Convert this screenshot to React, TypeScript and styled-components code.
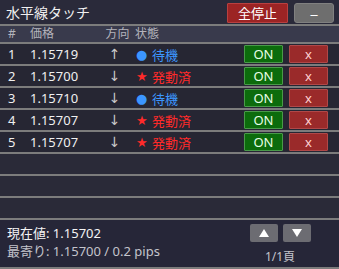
import React from "react";
import styled, { createGlobalStyle } from "styled-components";

const Global = createGlobalStyle`
  html, body { margin: 0; padding: 0; background: #262633; }
  body { font-family: "Noto Sans", "Noto Sans CJK JP", sans-serif; }
`;

const Panel = styled.div`
  width: 339px;
  height: 269px;
  background: #262633;
  color: #e8e8e8;
  display: flex;
  flex-direction: column;
  overflow: hidden;
`;

const TitleBar = styled.div`
  height: 24px;
  display: flex;
  align-items: center;
  padding: 0 5px 0 6px;
  background: #2a2a3a;
  border-bottom: 2px solid #7c7c7c;
  box-sizing: content-box;
`;

const Title = styled.div`
  flex: 1;
  font-size: 14px;
  color: #f0f0f0;
`;

const TopButton = styled.button<{ $kind: "stop" | "min" }>`
  height: 20px;
  margin-top: 1px;
  border-radius: ${(p) => (p.$kind === "min" ? "3px" : "1px")};
  border: 1px solid ${(p) => (p.$kind === "stop" ? "#b84040" : "#808080")};
  background: ${(p) => (p.$kind === "stop" ? "#9c2424" : "#6e6e6e")};
  color: #ffffff;
  font-family: "Noto Sans CJK JP", sans-serif;
  font-size: ${(p) => (p.$kind === "stop" ? "13px" : "16px")};
  padding: 0;
  width: ${(p) => (p.$kind === "stop" ? "61px" : "40px")};
  margin-left: ${(p) => (p.$kind === "min" ? "6px" : "0")};
  display: flex;
  align-items: center;
  justify-content: center;
`;

const Grid = `
  display: grid;
  grid-template-columns: 22px 70px 35px 109px 39px 39px;
  column-gap: 0;
  align-items: center;
  padding-left: 8px;
`;

const HeaderRow = styled.div`
  ${Grid}
  height: 16px;
  line-height: 16px;
  background: #393a4c;
  border-bottom: 2px solid #7c7c7c;
  color: #b4b4bc;
  font-size: 12px;
  font-family: "Noto Sans", "Noto Sans CJK JP", sans-serif;
`;

const HCell = styled.div<{ $center?: boolean }>`
  text-align: ${(p) => (p.$center ? "center" : "left")};
  white-space: nowrap;
`;

const Row = styled.div`
  ${Grid}
  height: 20px;
  background: #262633;
  border-bottom: 2px solid #7c7c7c;
  font-size: 13px;
  color: #f0f0f0;
`;

const EmptyRow = styled.div`
  height: 20px;
  background: #2a2a38;
  border-bottom: 2px solid #7c7c7c;
`;

const Cell = styled.div`
  white-space: nowrap;
`;

const Arrow = styled.div`
  text-align: center;
  color: #c8c8c8;
  font-family: "DejaVu Sans", sans-serif;
  font-size: 14px;
  margin-left: -6px;
`;

const Status = styled.div<{ $active: boolean }>`
  color: ${(p) => (p.$active ? "#ff2a2a" : "#3c96ff")};
  font-family: "Noto Sans CJK JP", sans-serif;
  font-size: 13px;
  white-space: nowrap;
  display: flex;
  align-items: center;
  gap: 5px;
  padding-left: 1px;
`;

const Mark = styled.span`
  font-family: "DejaVu Sans", sans-serif;
  font-size: 13px;
  width: 11px;
  display: inline-block;
  text-align: center;
`;

const RowButton = styled.button<{ $kind: "on" | "x" }>`
  height: 18px;
  width: 39px;
  padding: 0;
  border-radius: 1px;
  border: 1px solid ${(p) => (p.$kind === "on" ? "#4a9a4a" : "#b04848")};
  background: ${(p) => (p.$kind === "on" ? "#0c6c0c" : "#9a2a2a")};
  color: ${(p) => (p.$kind === "on" ? "#e8ffe8" : "#ffd0d0")};
  font-family: "Noto Sans", sans-serif;
  font-size: 13px;
  display: flex;
  align-items: center;
  justify-content: center;
  line-height: 1;
  margin-left: ${(p) => (p.$kind === "x" ? "6px" : "0")};
`;

const Footer = styled.div`
  flex: 1;
  display: flex;
  background: #262638;
  border-bottom: 2px solid #7c7c7c;
  padding: 4px 0 0 7px;
`;

const Info = styled.div`
  flex: 1;
  display: flex;
  flex-direction: column;
  font-size: 13px;
  line-height: 18px;
  font-family: "Noto Sans", "Noto Sans CJK JP", sans-serif;
`;

const InfoLine = styled.div<{ $dim?: boolean }>`
  color: ${(p) => (p.$dim ? "#c4c4cc" : "#f4f4f4")};
  white-space: nowrap;
`;

const Pager = styled.div`
  width: 62px;
  margin-right: 28px;
  display: flex;
  flex-direction: column;
  align-items: center;
`;

const PagerButtons = styled.div`
  display: flex;
  gap: 5px;
`;

const PageButton = styled.button`
  width: 28px;
  height: 18px;
  padding: 0;
  border: none;
  border-radius: 2px;
  background: #6c6c72;
  display: flex;
  align-items: center;
  justify-content: center;
`;

const PageText = styled.div`
  margin-top: 5px;
  font-size: 12px;
  color: #c4c4cc;
  font-family: "Noto Sans", "Noto Sans CJK JP", sans-serif;
`;

const rows = [
  { n: 1, price: "1.15719", up: true, active: false },
  { n: 2, price: "1.15700", up: false, active: true },
  { n: 3, price: "1.15710", up: false, active: false },
  { n: 4, price: "1.15707", up: false, active: true },
  { n: 5, price: "1.15707", up: false, active: true },
];

export default function App() {
  return (
    <Panel>
      <Global />
      <TitleBar>
        <Title>水平線タッチ</Title>
        <TopButton $kind="stop">全停止</TopButton>
        <TopButton $kind="min">–</TopButton>
      </TitleBar>
      <HeaderRow>
        <HCell>#</HCell>
        <HCell>価格</HCell>
        <HCell $center>方向</HCell>
        <HCell>状態</HCell>
        <HCell />
        <HCell />
      </HeaderRow>
      {rows.map((r) => (
        <Row key={r.n}>
          <Cell>{r.n}</Cell>
          <Cell>{r.price}</Cell>
          <Arrow>{r.up ? "↑" : "↓"}</Arrow>
          <Status $active={r.active}>
            <Mark>{r.active ? "★" : "●"}</Mark>
            {r.active ? "発動済" : "待機"}
          </Status>
          <RowButton $kind="on">ON</RowButton>
          <RowButton $kind="x">x</RowButton>
        </Row>
      ))}
      <EmptyRow />
      <EmptyRow />
      <EmptyRow />
      <Footer>
        <Info>
          <InfoLine>現在値: 1.15702</InfoLine>
          <InfoLine $dim>最寄り: 1.15700 / 0.2 pips</InfoLine>
        </Info>
        <Pager>
          <PagerButtons>
            <PageButton>
              <svg width="10" height="8" viewBox="0 0 10 8">
                <polygon points="5,0 10,8 0,8" fill="#ffffff" />
              </svg>
            </PageButton>
            <PageButton>
              <svg width="10" height="8" viewBox="0 0 10 8">
                <polygon points="0,0 10,0 5,8" fill="#ffffff" />
              </svg>
            </PageButton>
          </PagerButtons>
          <PageText>1/1頁</PageText>
        </Pager>
      </Footer>
    </Panel>
  );
}
